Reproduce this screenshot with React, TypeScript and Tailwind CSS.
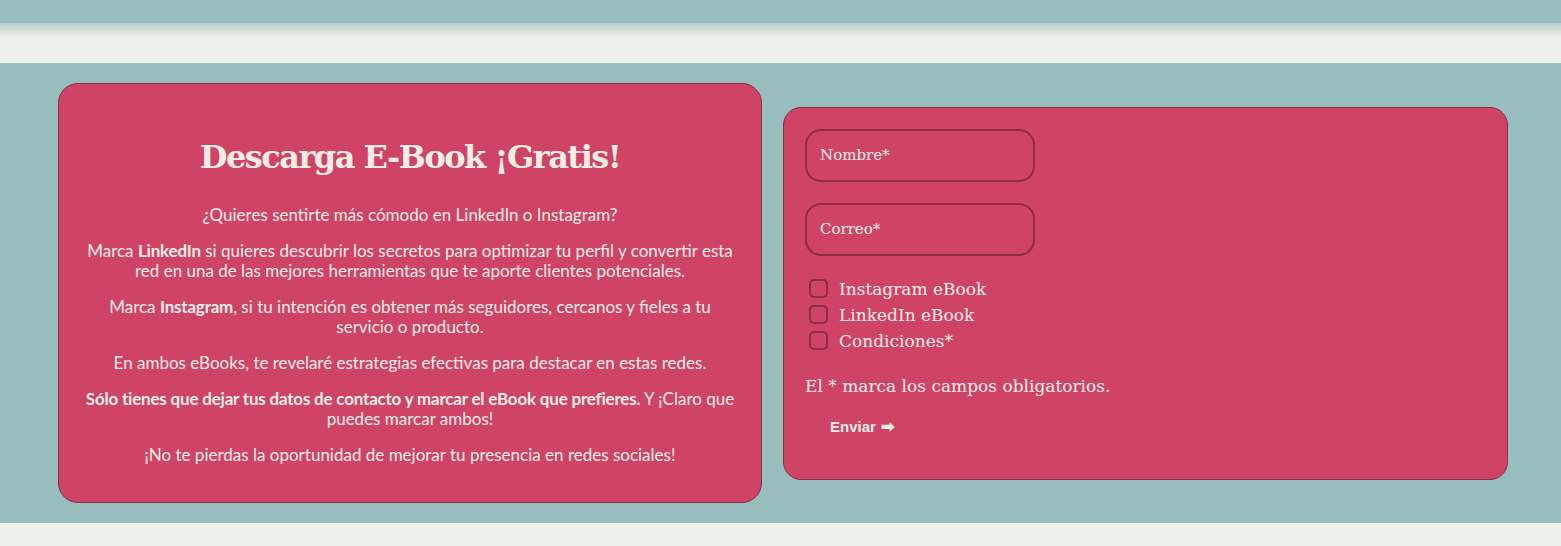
import React from "react";

const serif = { fontFamily: '"DejaVu Serif", "Liberation Serif", serif' };

const Checkbox = ({ label }: { label: string }) => (
  <label className="flex items-center gap-[11px] h-[26px] text-[17px] leading-[26px] text-[#f3eee4]">
    <span className="w-[19px] h-[19px] rounded-[5px] border-2 border-[#8e2b45] bg-[#cf4466] shrink-0" />
    <span>{label}</span>
  </label>
);

export default function App() {
  return (
    <div className="w-full min-h-[546px] bg-[#eef0ea]">
      <div className="h-[23px] bg-[#97bdbc]" />
      <div className="h-[14px] bg-gradient-to-b from-[#b9cec9] to-[#eef0ea]" />
      <div className="h-[26px] bg-[#eef0ea]" />

      <section className="bg-[#97bdbc] h-[460px] pl-[58px] pr-[53px] flex items-center gap-[21px]">
        <div
          className="w-[704px] h-[420px] shrink-0 rounded-[20px] border border-[#8b2c43] bg-[#cf4466] px-[23px] pt-[48px] text-center text-[#f3eee4]"
          style={{ fontFamily: 'Lato, "Open Sans", sans-serif' }}
        >
          <h2 className="text-[32px] leading-[50px] font-bold mb-[23px] tracking-[-1.5px]" style={serif}>
            Descarga E-Book ¡Gratis!
          </h2>
          <div className="text-[17px] leading-[20px] flex flex-col gap-[16px]">
            <p>¿Quieres sentirte más cómodo en LinkedIn o Instagram?</p>
            <p>
              Marca <b className="tracking-[-0.2px]">LinkedIn</b> si quieres descubrir los secretos para optimizar tu perfil y convertir esta red en una de las mejores herramientas que te aporte clientes potenciales.
            </p>
            <p>
              Marca <b className="tracking-[-0.2px]">Instagram</b>, si tu intención es obtener más seguidores, cercanos y fieles a tu servicio o producto.
            </p>
            <p>En ambos eBooks, te revelaré estrategias efectivas para destacar en estas redes.</p>
            <p>
              <b className="tracking-[-0.2px]">Sólo tienes que dejar tus datos de contacto y marcar el eBook que prefieres.</b> Y ¡Claro que puedes marcar ambos!
            </p>
            <p>¡No te pierdas la oportunidad de mejorar tu presencia en redes sociales!</p>
          </div>
        </div>

        <div
          className="flex-1 h-[373px] rounded-[18px] border border-[#8b2c43] bg-[#cf4466] pl-[21px] pt-[21px] text-[#f3eee4]"
          style={serif}
        >
          <div className="flex flex-col gap-[21px]">
            <div className="w-[230px] h-[53px] rounded-[16px] border-2 border-[#8e2b45] flex items-center px-[13px] text-[15px]">
              Nombre*
            </div>
            <div className="w-[230px] h-[53px] rounded-[16px] border-2 border-[#8e2b45] flex items-center px-[13px] text-[15px]">
              Correo*
            </div>
          </div>
          <div className="mt-[20px] pl-[4px] flex flex-col">
            <Checkbox label="Instagram eBook" />
            <Checkbox label="LinkedIn eBook" />
            <Checkbox label="Condiciones*" />
          </div>
          <p className="mt-[19px] text-[17px] leading-[26px]">El * marca los campos obligatorios.</p>
          <button
            className="mt-[17px] ml-[25px] text-[15px] font-bold text-[#f3eee4] flex items-center gap-[5px]"
            style={{ fontFamily: '"Liberation Sans", Arial, sans-serif' }}
          >
            Enviar <span className="text-[16px] leading-none">➡</span>
          </button>
        </div>
      </section>
      <div className="h-[23px] bg-[#eef0ea]" />
    </div>
  );
}
